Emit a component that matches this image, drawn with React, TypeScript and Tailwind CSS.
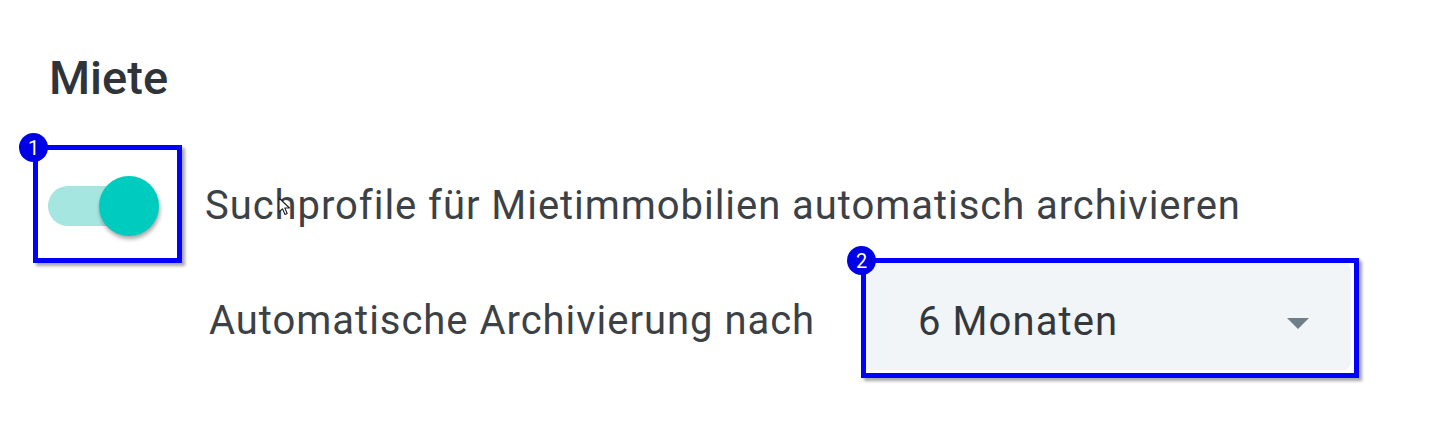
import React from "react";

function Badge({ n }: { n: number }) {
  return (
    <div className="absolute -left-[19px] -top-[17px] flex h-[29px] w-[29px] items-center justify-center rounded-full bg-[#0000e6] text-[20px] leading-none text-white">
      {n}
    </div>
  );
}

function Cursor() {
  return (
    <svg
      className="pointer-events-none absolute left-[73px] top-[11px]"
      width="14"
      height="20"
      viewBox="0 0 14 20"
    >
      <path
        d="M1 1 L1 15 L4.5 11.8 L7 17.5 L9.2 16.5 L6.8 11 L11.5 11 Z"
        fill="#fff"
        stroke="#222"
        strokeWidth="1.1"
        strokeLinejoin="round"
      />
    </svg>
  );
}

export default function App() {
  return (
    <div className="h-[432px] w-[1432px] overflow-hidden bg-white font-['Roboto',sans-serif] text-[#3c4146]">
      <h2 className="ml-[49px] mt-[54px] text-[47px] font-medium leading-none text-[#2e3439]">
        Miete
      </h2>

      {/* auto archive toggle */}
      <div className="mt-[44px] flex items-start">
        <div className="relative ml-[33px] flex h-[118px] w-[149px] border-[5px] border-[#0000ff] shadow-[3px_3px_3px_rgba(0,0,0,0.35)]">
          <Badge n={1} />
          <div className="relative ml-[10px] mt-[26px] h-[60px] w-[111px]">
            <div className="absolute left-0 top-[10px] h-[40px] w-[100px] rounded-full bg-[#a5e6e0]" />
            <div className="absolute left-[51px] top-0 h-[60px] w-[60px] rounded-full bg-[#00cbbf] shadow-[1px_3px_4px_rgba(0,0,0,0.35)]" />
          </div>
        </div>
        <div className="relative ml-[23px] mt-[41px] text-[40px] leading-none tracking-[0.95px]">
          Suchprofile für Mietimmobilien automatisch archivieren
          <Cursor />
        </div>
      </div>

      {/* archive after */}
      <div className="-mt-[5px] flex items-start">
        <div className="ml-[209px] mt-[43px] w-[652px] text-[40px] leading-none tracking-[0.97px]">
          Automatische Archivierung nach
        </div>
        <div className="relative h-[120px] w-[498px] border-[5px] border-[#0000ff] shadow-[3px_3px_3px_rgba(0,0,0,0.35)]">
          <Badge n={2} />
          <div className="mb-[3px] mr-[3px] flex h-[107px] items-start justify-between rounded-r-[8px] bg-[#f1f5f8] pl-[52px] pr-[42px]">
            <span className="mt-[39px] text-[40px] leading-none tracking-[1.1px] text-[#33383d]">6 Monaten</span>
            <svg className="mt-[55px]" width="22" height="11" viewBox="0 0 22 11">
              <path d="M0 0 L22 0 L11 11 Z" fill="#6e7f8a" />
            </svg>
          </div>
        </div>
      </div>
    </div>
  );
}
